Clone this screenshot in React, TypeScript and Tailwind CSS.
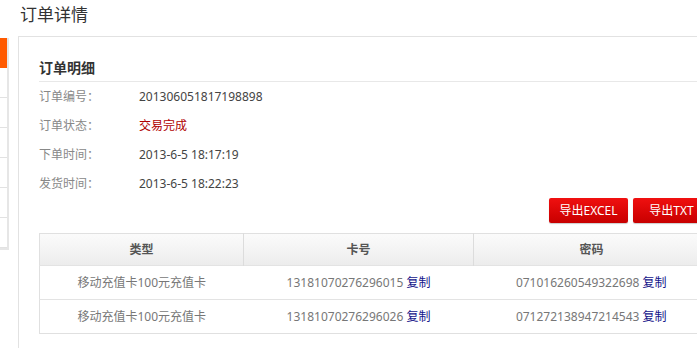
import React from 'react'

const cards = [
  { type: '移动充值卡100元充值卡', no: '13181070276296015', pwd: '071016260549322698' },
  { type: '移动充值卡100元充值卡', no: '13181070276296026', pwd: '071272138947214543' },
]

const fields = [
  { label: '订单编号：', value: '201306051817198898', red: false },
  { label: '订单状态：', value: '交易完成', red: true },
  { label: '下单时间：', value: '2013-6-5 18:17:19', red: false },
  { label: '发货时间：', value: '2013-6-5 18:22:23', red: false },
]

export default function App() {
  return (
    <div
      className="w-[697px] h-[348px] overflow-hidden bg-white text-[12px] text-[#444]"
      style={{ fontFamily: '"Noto Sans", "Noto Sans CJK SC", sans-serif' }}
    >
      {/* Page title */}
      <h1 className="h-[36px] pl-[20px] text-[17px] leading-[30px] text-[#333]">订单详情</h1>

      <div className="flex items-start">
        {/* Side menu (cut off) */}
        <div className="mt-[2px] w-[9px] shrink-0 border-r-2 border-b-2 border-[#e6e6e6] bg-white">
          <div className="h-[30px] bg-[#ff5a00]" />
          {[1, 2, 3, 4, 5, 6].map((i) => (
            <div key={i} className="h-[30px] border-b border-[#e2e2e2]" />
          ))}
        </div>

        {/* Main panel */}
        <div className="ml-[9px] w-[700px] shrink-0 h-[320px] border-l border-t border-[#e2e2e2] pl-[20px]">
          <div className="w-[671px]">
            <h2 className="h-[45px] border-b border-[#e8e8e8] pt-[23px] text-[14px] font-bold leading-[16px] text-[#333]">
              订单明细
            </h2>

            <div className="flex flex-col gap-[5px] pt-[3px]">
              {fields.map((f) => (
                <div key={f.label} className="flex h-[24px] items-center">
                  <span className="w-[100px] text-[#888]">{f.label}</span>
                  <span className={f.red ? 'text-[#b00000]' : 'text-[#444]'}>{f.value}</span>
                </div>
              ))}
            </div>

            <div className="mt-[2px] flex justify-end gap-[5px]">
              <button className="h-[25px] w-[79px] rounded-[2px] bg-gradient-to-b from-[#f01010] to-[#c80000] text-[12px] text-white shadow-[0_1px_1px_rgba(0,0,0,0.2)]">
                导出EXCEL
              </button>
              <button className="h-[25px] w-[77px] rounded-[2px] bg-gradient-to-b from-[#f01010] to-[#c80000] text-[12px] text-white shadow-[0_1px_1px_rgba(0,0,0,0.2)]">
                导出TXT
              </button>
            </div>

            <table className="mt-[10px] w-[671px] table-fixed border-collapse border border-[#e0e0e0]">
              <thead>
                <tr className="h-[32px] bg-gradient-to-b from-[#fbfbfb] to-[#ececec]">
                  <th className="w-[204px] border-r border-[#dcdcdc] font-bold text-[#555]">类型</th>
                  <th className="w-[230px] border-r border-[#dcdcdc] font-bold text-[#555]">卡号</th>
                  <th className="font-bold text-[#555]">密码</th>
                </tr>
              </thead>
              <tbody>
                {cards.map((c) => (
                  <tr key={c.no} className="h-[34px] border-t border-[#e3e3e3] text-center text-[#777]">
                    <td>{c.type}</td>
                    <td>
                      {c.no} <a className="text-[#14148a]">复制</a>
                    </td>
                    <td>
                      {c.pwd} <a className="text-[#14148a]">复制</a>
                    </td>
                  </tr>
                ))}
              </tbody>
            </table>
          </div>
        </div>
      </div>
    </div>
  )
}
